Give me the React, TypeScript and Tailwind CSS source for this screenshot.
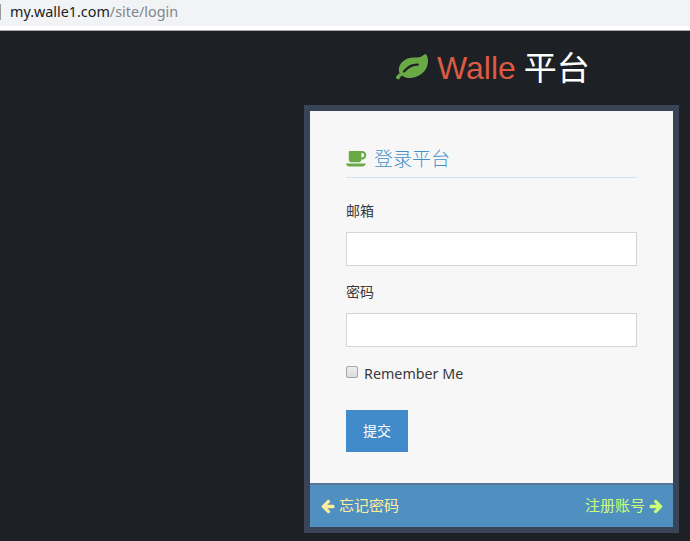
type IconProps = { className?: string };

function LeafIcon({ className }: IconProps) {
  return (
    <svg viewBox="0 0 1792 1792" fill="currentColor" className={className}>
      <path d="M1280 704q0-26-19-45t-45-19q-172 0-318 49.5t-259.5 134-235.5 219.5q-19 21-19 45 0 26 19 45t45 19q24 0 45-19 27-24 74-71t67-66q137-124 268.5-176t313.5-52q26 0 45-19t19-45zm512-198q0 95-20 193-46 224-184.5 383t-357.5 268q-214 108-438 108-148 0-286-47-15-5-88-42t-96-37q-16 0-39.5 32t-45 70-52.5 70-60 32q-43 0-63.5-17.5t-45.5-59.5q-2-4-6-11t-5.5-10-3-9.5-1.5-13.5q0-35 31-73.5t68-65.5 68-56 31-48q0-4-14-38t-16-44q-9-51-9-104 0-115 43.5-220t119-184.5 170.5-139 204-95.5q55-18 145-25.5t179.5-9 178.5-6 163.5-24 113.5-56.5l29.5-29.5 29.5-28 27-20 36.5-16 43.5-4.5q39 0 70.5 46t47.5 112 24 124 8 96z" />
    </svg>
  );
}

function CoffeeIcon({ className }: IconProps) {
  return (
    <svg viewBox="0 0 1920 1792" fill="currentColor" className={className}>
      <path d="M1664 640q0-80-56-136t-136-56h-64v384h64q80 0 136-56t56-136zm-1664 768h1792q0 106-75 181t-181 75h-1280q-106 0-181-75t-75-181zm1856-768q0 159-112.5 271.5t-271.5 112.5h-64v32q0 92-66 158t-158 66h-704q-92 0-158-66t-66-158v-736q0-26 19-45t45-19h1152q159 0 271.5 112.5t112.5 271.5z" />
    </svg>
  );
}

function ArrowLeftIcon({ className }: IconProps) {
  return (
    <svg viewBox="128 128 1600 1664" fill="currentColor" className={className}>
      <path d="M1664 896v128q0 53-32.5 90.5t-84.5 37.5h-704l293 294q38 36 38 90t-38 90l-75 76q-37 37-90 37-52 0-91-37l-651-652q-37-37-37-90 0-52 37-91l651-650q38-38 91-38 52 0 90 38l75 74q38 38 38 91t-38 91l-293 293h704q52 0 84.5 37.5t32.5 90.5z" />
    </svg>
  );
}

function ArrowRightIcon({ className }: IconProps) {
  return (
    <svg viewBox="64 128 1600 1664" fill="currentColor" className={className}>
      <path d="M1600 960q0 54-37 91l-651 651q-39 37-91 37-51 0-90-37l-75-75q-38-38-38-91t38-91l293-293h-704q-52 0-84.5-37.5t-32.5-90.5v-128q0-53 32.5-90.5t84.5-37.5h704l-293-294q-38-36-38-90t38-90l75-75q38-38 90-38 53 0 91 38l651 651q37 35 37 90z" />
    </svg>
  );
}

function Field({ label, type }: { label: string; type: string }) {
  return (
    <label className="block h-[81px]">
      <span className="block h-[31px] text-sm leading-5 text-[#393939]">{label}</span>
      <input type={type} className="block h-[34px] w-full border border-[#d5d5d5] bg-white px-2 outline-none" />
    </label>
  );
}

export default function App() {
  return (
    <div className="flex h-[541px] w-[690px] flex-col overflow-hidden bg-[#1d2024] font-['Open_Sans','Noto_Sans_CJK_SC',sans-serif]">
      <div className="flex h-[31px] shrink-0 flex-col border-b border-[#a9abae] bg-white">
        <div className="flex h-[26px] items-start bg-[#f1f3f4]">
          <span className="mt-1 h-4 w-px bg-[#9a9a9a]" />
          <span className="mt-0.5 ml-[9px] font-['Noto_Sans',sans-serif] text-[14.35px] leading-5 text-[#202124]">
            my.walle1.com<span className="text-[#80868b]">/site/login</span>
          </span>
        </div>
      </div>

      <div className="ml-[304px] w-[375px]">
        <h1 className="flex h-[74px] items-center pl-[92px] font-['Liberation_Sans','Noto_Sans_CJK_SC',sans-serif] text-[32px] leading-none">
          <LeafIcon className="mr-[9px] size-8 text-[#69aa46]" />
          <span className="text-[#dd5a43]">Walle</span>
          <span className="ml-2 text-[33px] text-white">平台</span>
        </h1>

        <main className="border-[6px] border-[#394557] bg-[#f7f7f7]">
          <div className="h-[372px] px-9 pt-[30px]">
            <h4 className="mb-[23px] flex h-[37px] items-center border-b border-[#d5e3ef] text-[19px] font-light text-[#478fca]">
              <CoffeeIcon className="mr-[7px] mb-0.5 h-[20px] w-[21px] text-[#69aa46]" />
              登录平台
            </h4>
            <form>
              <Field label="邮箱" type="text" />
              <Field label="密码" type="password" />
              <label className="flex h-5 items-center text-[14.3px] text-[#393939]">
                <span className="mr-1.5 mb-[3px] size-3 rounded-[2px] border border-[#a6a6a6] bg-linear-to-b from-[#eeeeee] to-[#dcdcdc]" />
                <span className="mt-px font-['Noto_Sans',sans-serif]">Remember Me</span>
              </label>
              <button type="button" className="mt-[27px] block h-[42px] w-[62px] bg-[#428bca] text-sm text-white">
                提交
              </button>
            </form>
          </div>
          <footer className="flex h-[44px] items-center justify-between border-t-2 border-[#597597] bg-[#5090c1] pr-2.5 pb-0.5 pl-[11px] text-[15px]">
            <a className="flex items-center gap-1 text-[#ffee99]">
              <ArrowLeftIcon className="mt-0.5 h-[15px] w-3.5" />
              忘记密码
            </a>
            <a className="flex items-center gap-1 text-[#ccff77]">
              注册账号
              <ArrowRightIcon className="mt-0.5 h-[15px] w-3.5" />
            </a>
          </footer>
        </main>
      </div>
    </div>
  );
}
